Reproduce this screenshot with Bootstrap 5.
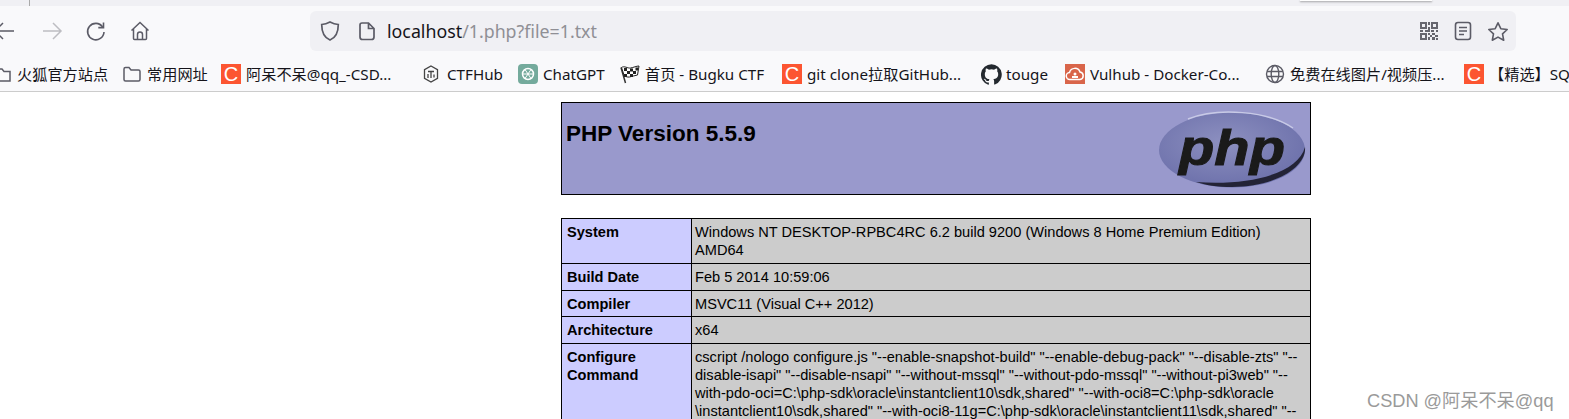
<!DOCTYPE html>
<html lang="zh">
<head>
<meta charset="utf-8">
<title>phpinfo()</title>
<link href="https://cdn.jsdelivr.net/npm/bootstrap@5.3.0/dist/css/bootstrap.min.css" rel="stylesheet">
<style>
html,body{height:419px;overflow:hidden;background:#fff}
body{font-family:"Liberation Sans",Arial,sans-serif;position:relative}
.tabstrip{height:6px;background:#f0f0f4;position:relative}
.tabsep{position:absolute;left:29px;top:0;width:1px;height:6px;background:#aaa}
.tipedge{position:absolute;left:1300px;top:0;width:132px;height:1px;background:#fff;box-shadow:0 1px 2px rgba(0,0,0,.45)}
.toolbar{height:45px;background:#f9f9fb;padding-top:5px}
.navbtns{width:310px;height:40px;flex:none;position:relative}
.navbtns svg{position:absolute;top:9px}
.ic-back{left:-10px}.ic-fwd{left:41px}.ic-rel{left:85px}.ic-home{left:130px}
.urlbar{width:1206px;height:40px;background:#f0f0f4;border-radius:6px;padding:0 7px 0 10px}
.urlbar .shield{margin-right:18px}
.urltext{font-family:"Noto Sans",sans-serif;font-size:17.8px;margin-left:11px;color:#15141a;line-height:40px}
.urltext span{color:#8f8f95}
.urlright{gap:15px}
.bmbar{height:41px;background:#f9f9fb;border-bottom:1px solid #ccc;display:grid;grid-template-columns:125px 99px 202px 95px 102px 162px 199px 84px 200px 199px 120px;margin-left:-3px;width:1600px;padding-top:6px;font-family:"Noto Sans","Noto Sans CJK SC",sans-serif;font-size:15.2px;color:#15141a;white-space:nowrap}
.bmwrap{overflow:hidden;background:#f9f9fb}
.bmitem{display:flex;align-items:center;height:34px;overflow:hidden}
.bmitem svg{flex:none;margin-right:5px}
.sq{width:20px;height:20px;flex:none;background:#fc5531;color:#fff;font:400 20px/20px "Liberation Sans",sans-serif;text-align:center;margin-right:5px}
.phpwrap{width:749px;margin:10px 0 0 561px;color:#000}
.phphead{width:750px;height:93px;background:#99c;border:1px solid #000;padding:17px 4px 0}
.phphead h1{font:700 22.5px/28px "Liberation Sans",sans-serif;margin:0}
.phplogo{margin:-9px -2px 0 0;flex:none}
.phptab{width:750px;table-layout:fixed;border-collapse:collapse;margin:23px 0 0;font-size:14.6px;line-height:18px}
.phptab td{border:1px solid #000;padding:4px 3px;vertical-align:top;white-space:nowrap}
.phptab .ek{width:130px;background:#ccf;font-weight:700;padding-left:5px}
.phptab .ev{background:#ccc}
.phptab .tight td{padding-bottom:3px}
.wmark{position:absolute;left:1367px;top:390px;font:400 18.2px/22px "Liberation Sans","Noto Sans CJK SC",sans-serif;color:#9a9a9a}
</style>
</head>
<body>
<div class="tabstrip"><div class="tabsep"></div><div class="tipedge"></div></div>
<div class="toolbar d-flex">
  <div class="navbtns">
    <svg class="ic-back" width="26" height="22" viewBox="0 0 26 22" fill="none" stroke="#5b5b66" stroke-width="1.5"><path d="M5 11h19M13 3l-8 8 8 8"/></svg>
    <svg class="ic-fwd" width="22" height="22" viewBox="0 0 22 22" fill="none" stroke="#bdbdc2" stroke-width="1.5"><path d="M2 11h18M12 3l8 8-8 8"/></svg>
    <svg class="ic-rel" width="22" height="22" viewBox="0 0 22 22" fill="none" stroke="#5b5b66" stroke-width="1.6"><path d="M17.6 7A8.2 8.2 0 1 0 19 12"/><path d="M18.5 2.5V7.6h-5.2" /></svg>
    <svg class="ic-home" width="20" height="22" viewBox="0 0 20 22" fill="none" stroke="#5b5b66" stroke-width="1.5"><path d="M1.5 10.5 10 2.5l8.5 8M3.5 9v9.500a1 1 0 0 0 1 1h11a1 1 0 0 0 1-1V9M7.500 19.500v-5a2.500 2.500 0 0 1 5 0v5"/></svg>
  </div>
  <div class="urlbar d-flex align-items-center">
    <svg class="shield" width="20" height="22" viewBox="0 0 20 22" fill="none" stroke="#5b5b66" stroke-width="1.7"><path d="M10 2c3 1.600 5.500 2.300 8.300 2.500 0 8-2 13-8.300 15.500C3.700 17.500 1.700 12.500 1.700 4.500 4.500 4.300 7 3.600 10 2z"/></svg>
    <svg width="18" height="20" viewBox="0 0 18 20" fill="none" stroke="#5b5b66" stroke-width="1.7"><path d="M4 2h6.500L16 7.500V16a2.500 2.500 0 0 1-2.500 2.500h-9A2.500 2.500 0 0 1 2 16V4a2 2 0 0 1 2-2zM10.500 2v5.500H16"/></svg>
    <div class="urltext flex-grow-1">localhost<span>/1.php?file=1.txt</span></div>
    <div class="urlright d-flex align-items-center">
      <svg width="20" height="20" viewBox="0 0 20 20" fill="#66666e"><path d="M1 1h7v7H1zm2 2v3h3V3zM12 1h7v7h-7zm2 2v3h3V3zM1 12h7v7H1zm2 2v3h3v-3zM9 1h2v3H9zM9 6h2v3H9zM1 9h3v2H1zM6 9h5v2H6zM12 9h3v2h-3zM17 9h2v2h-2zM9 12h2v2H9zM11 14h2v2h-2zM9 16h2v3H9zM13 12h3v2h-3zM16 14h3v2h-3zM13 16h3v3h-3zM17 17h2v2h-2z"/></svg>
      <svg width="18" height="20" viewBox="0 0 18 20" fill="none" stroke="#5b5b66" stroke-width="1.6"><rect x="1.500" y="1.500" width="15" height="17" rx="2.500"/><path d="M5 6.500h8M5 10h8M5 13.500h5"/></svg>
      <svg width="22" height="21" viewBox="0 0 22 21" fill="none" stroke="#5b5b66" stroke-width="1.6" stroke-linejoin="round"><path d="m11 1.800 2.800 5.900 6.400.8-4.700 4.400 1.200 6.300L11 16.100l-5.700 3.100 1.200-6.300L1.800 8.500l6.400-.8z"/></svg>
    </div>
  </div>
  <div class="flex-grow-1"></div>
</div>
<div class="bmwrap">
<div class="bmbar">
  <div class="bmitem"><svg width="15" height="20" viewBox="0 0 15 20" fill="none" stroke="#5b5b66" stroke-width="1.500"><path d="M1 5h4l2 2.500h6v9.500H1z"/></svg><span>火狐官方站点</span></div>
  <div class="bmitem"><svg width="20" height="20" viewBox="0 0 20 20" fill="none" stroke="#5b5b66" stroke-width="1.500"><path d="M2 5a1.500 1.500 0 0 1 1.500-1.500H7l2 2.500h7.500A1.500 1.500 0 0 1 18 7.500v8a1.500 1.500 0 0 1-1.500 1.500h-13A1.500 1.500 0 0 1 2 15.500z"/></svg><span>常用网址</span></div>
  <div class="bmitem"><div class="sq">C</div><span>阿呆不呆@qq_-CSD...</span></div>
  <div class="bmitem"><svg class="me-2" width="16" height="18" viewBox="0 0 16 18" fill="none" stroke="#444" stroke-width="1.300"><path d="M8 1l6.500 3.700v8.600L8 17l-6.500-3.700V4.700z"/><path d="M5 6.500h6M8 6.500V13M5 9v4M11 9.500v3"/></svg><span>CTFHub</span></div>
  <div class="bmitem"><svg width="20" height="20" viewBox="0 0 20 20"><rect width="20" height="20" rx="4" fill="#74aa9c"/><circle cx="10" cy="10" r="5.500" fill="none" stroke="#fff" stroke-width="1.500"/><path d="M7 5.500l6 9M13 5.500l-6 9M4.500 10h11" stroke="#fff" stroke-width="1"/></svg><span>ChatGPT</span></div>
  <div class="bmitem"><svg width="20" height="20" viewBox="0 0 20 20"><path d="M5.500 19 1 3.500" stroke="#333" stroke-width="1.500"/><path d="M1.500 3.500c3-2 6 1 9 .5s6-2 8.500-2l-1.500 9c-3 .5-5.500 1.500-8 2s-3.500-1-5-.5z" fill="#fff" stroke="#222"/><path d="M4 4h3v3H4zM10 4.500h3v3h-3zM15.500 3.500h2.500v3h-2.500zM7 7h3v3H7zM13 7h3v3h-3zM4 10h3v3H4zM10 10h3v3h-3z" fill="#222"/></svg><span>首页 - Bugku CTF</span></div>
  <div class="bmitem"><div class="sq">C</div><span>git clone拉取GitHub...</span></div>
  <div class="bmitem"><svg class="me-1" width="21" height="21" viewBox="0 0 16 16" fill="#24292f"><path d="M8 .2a8 8 0 0 0-2.500 15.600c.4.100.5-.2.500-.4v-1.400c-2.200.5-2.700-1-2.700-1-.4-.9-.9-1.200-.9-1.200-.7-.5.100-.5.100-.5.800.100 1.200.8 1.200.8.700 1.200 1.900.9 2.300.7.100-.5.300-.9.500-1.100-1.800-.2-3.600-.9-3.600-4 0-.9.300-1.600.8-2.100-.1-.2-.4-1 .1-2.100 0 0 .7-.2 2.200.8a7.600 7.600 0 0 1 4 0c1.500-1 2.200-.8 2.200-.8.400 1.100.2 1.900.1 2.100.5.600.8 1.300.8 2.100 0 3.100-1.900 3.700-3.700 3.900.3.300.6.800.6 1.500v2.200c0 .2.100.5.600.4A8 8 0 0 0 8 .2z"/></svg><span>touge</span></div>
  <div class="bmitem"><svg width="20" height="20" viewBox="0 0 20 20"><rect width="20" height="20" fill="#d9654a"/><path d="M5 15.500a3.500 3.500 0 0 1-.5-7A5.500 5.500 0 0 1 15 8a3.800 3.800 0 0 1 0 7.500z" fill="none" stroke="#fff" stroke-width="1.500"/><circle cx="10" cy="10" r="1.500" fill="#fff"/><path d="M7 14v-2h6v2" fill="#fff"/></svg><span>Vulhub - Docker-Co...</span></div>
  <div class="bmitem"><svg width="20" height="20" viewBox="0 0 20 20" fill="none" stroke="#5b5b66" stroke-width="1.400"><circle cx="10" cy="10" r="8.500"/><ellipse cx="10" cy="10" rx="3.800" ry="8.500"/><path d="M2 7.500h16M2 12.500h16"/></svg><span>免费在线图片/视频压...</span></div>
  <div class="bmitem"><div class="sq">C</div><span>【精选】SQL注入</span></div>
</div>
</div>
<div class="phpwrap">
  <div class="phphead d-flex justify-content-between">
    <h1>PHP Version 5.5.9</h1>
    <svg class="phplogo" width="150" height="78" viewBox="0 0 150 78">
      <defs><radialGradient id="lg" cx="45%" cy="40%" r="60%"><stop offset="0" stop-color="#8d90c0"/><stop offset="1" stop-color="#6d71ab"/></radialGradient></defs>
      <ellipse cx="74" cy="39" rx="73" ry="37.500" fill="url(#lg)"/>
      <path d="M30 8C60-4 110 0 135 17" fill="none" stroke="#c8cae6" stroke-width="1.500"/>
      <path d="M147 36c2 20-30 40-73 40-15 0-27-2-36-5 52 4 102-8 109-35z" fill="#232336"/>
      <text x="21" y="54" font-family="Liberation Sans" font-size="50" font-weight="700" font-style="italic" fill="#1a1a1a" stroke="#1a1a1a" stroke-width="1" textLength="106" lengthAdjust="spacingAndGlyphs">php</text>
    </svg>
  </div>
  <table class="phptab">
    <tr><td class="ek">System</td><td class="ev">Windows NT DESKTOP-RPBC4RC 6.2 build 9200 (Windows 8 Home Premium Edition)<br>AMD64</td></tr>
    <tr><td class="ek">Build Date</td><td class="ev">Feb 5 2014 10:59:06</td></tr>
    <tr class="tight"><td class="ek">Compiler</td><td class="ev">MSVC11 (Visual C++ 2012)</td></tr>
    <tr><td class="ek">Architecture</td><td class="ev">x64</td></tr>
    <tr><td class="ek">Configure<br>Command</td><td class="ev">cscript /nologo configure.js "--enable-snapshot-build" "--enable-debug-pack" "--disable-zts" "--<br>disable-isapi" "--disable-nsapi" "--without-mssql" "--without-pdo-mssql" "--without-pi3web" "--<br>with-pdo-oci=C:\php-sdk\oracle\instantclient10\sdk,shared" "--with-oci8=C:\php-sdk\oracle<br>\instantclient10\sdk,shared" "--with-oci8-11g=C:\php-sdk\oracle\instantclient11\sdk,shared" "--</td></tr>
  </table>
</div>
<div class="wmark">CSDN @阿呆不呆@qq</div>
<script src="https://cdn.jsdelivr.net/npm/bootstrap@5.3.0/dist/js/bootstrap.bundle.min.js"></script>
</body>
</html>
